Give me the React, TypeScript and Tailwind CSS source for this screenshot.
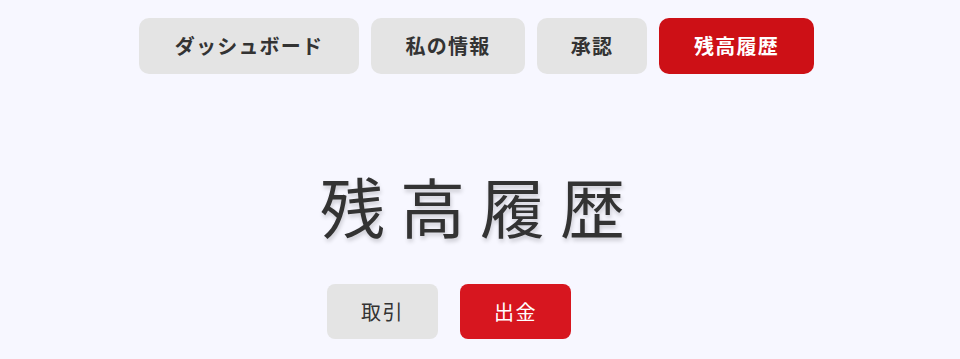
import { useState } from 'react';

const tabs = [
    { key: 'dashboard', label: 'ダッシュボード', width: 'w-[220px]' },
    { key: 'profile', label: '私の情報', width: 'w-[154px]' },
    { key: 'approval', label: '承認', width: 'w-[110px]' },
    { key: 'history', label: '残高履歴', width: 'w-[155px]' },
];

export default function App() {
    const [active, setActive] = useState('history');
    const [mode, setMode] = useState('withdraw');

    return (
        <div
            className="min-h-[359px] w-full bg-[#f7f7ff] text-[#333]"
            style={{ fontFamily: '"Noto Sans CJK JP", "Noto Sans", sans-serif' }}
        >
            {/* Top nav */}
            <nav className="flex justify-center gap-3 pt-[18px] pr-[7px]">
                {tabs.map(tab => (
                    <button
                        key={tab.key}
                        onClick={() => setActive(tab.key)}
                        className={`${tab.width} h-[56px] rounded-[10px] text-[20px] font-bold tracking-[1.2px] leading-none ${active === tab.key
                            ? 'bg-[#cd1016] text-white'
                            : 'bg-[#e4e4e4] text-[#333]'
                            }`}
                    >
                        {tab.label}
                    </button>
                ))}
            </nav>

            {/* Title */}
            <h1 className="mt-[91px] text-center text-[65px] leading-[80px] font-normal tracking-[15px] text-[#333] [text-shadow:1px_3px_4px_rgba(0,0,0,0.18)]">
                残高履歴
            </h1>

            {/* Sub actions */}
            <div className="mt-[39px] flex justify-center gap-[22px] pr-[62px]">
                <button
                    onClick={() => setMode('trade')}
                    className={`w-[111px] h-[55px] rounded-[8px] text-[20px] tracking-[1.5px] ${mode === 'trade' ? 'bg-[#d7161f] text-white' : 'bg-[#e4e4e4] text-[#333]'}`}
                >
                    取引
                </button>
                <button
                    onClick={() => setMode('withdraw')}
                    className={`w-[111px] h-[55px] rounded-[8px] text-[20px] tracking-[1.5px] ${mode === 'withdraw' ? 'bg-[#d7161f] text-white' : 'bg-[#e4e4e4] text-[#333]'}`}
                >
                    出金
                </button>
            </div>
        </div>
    );
}
